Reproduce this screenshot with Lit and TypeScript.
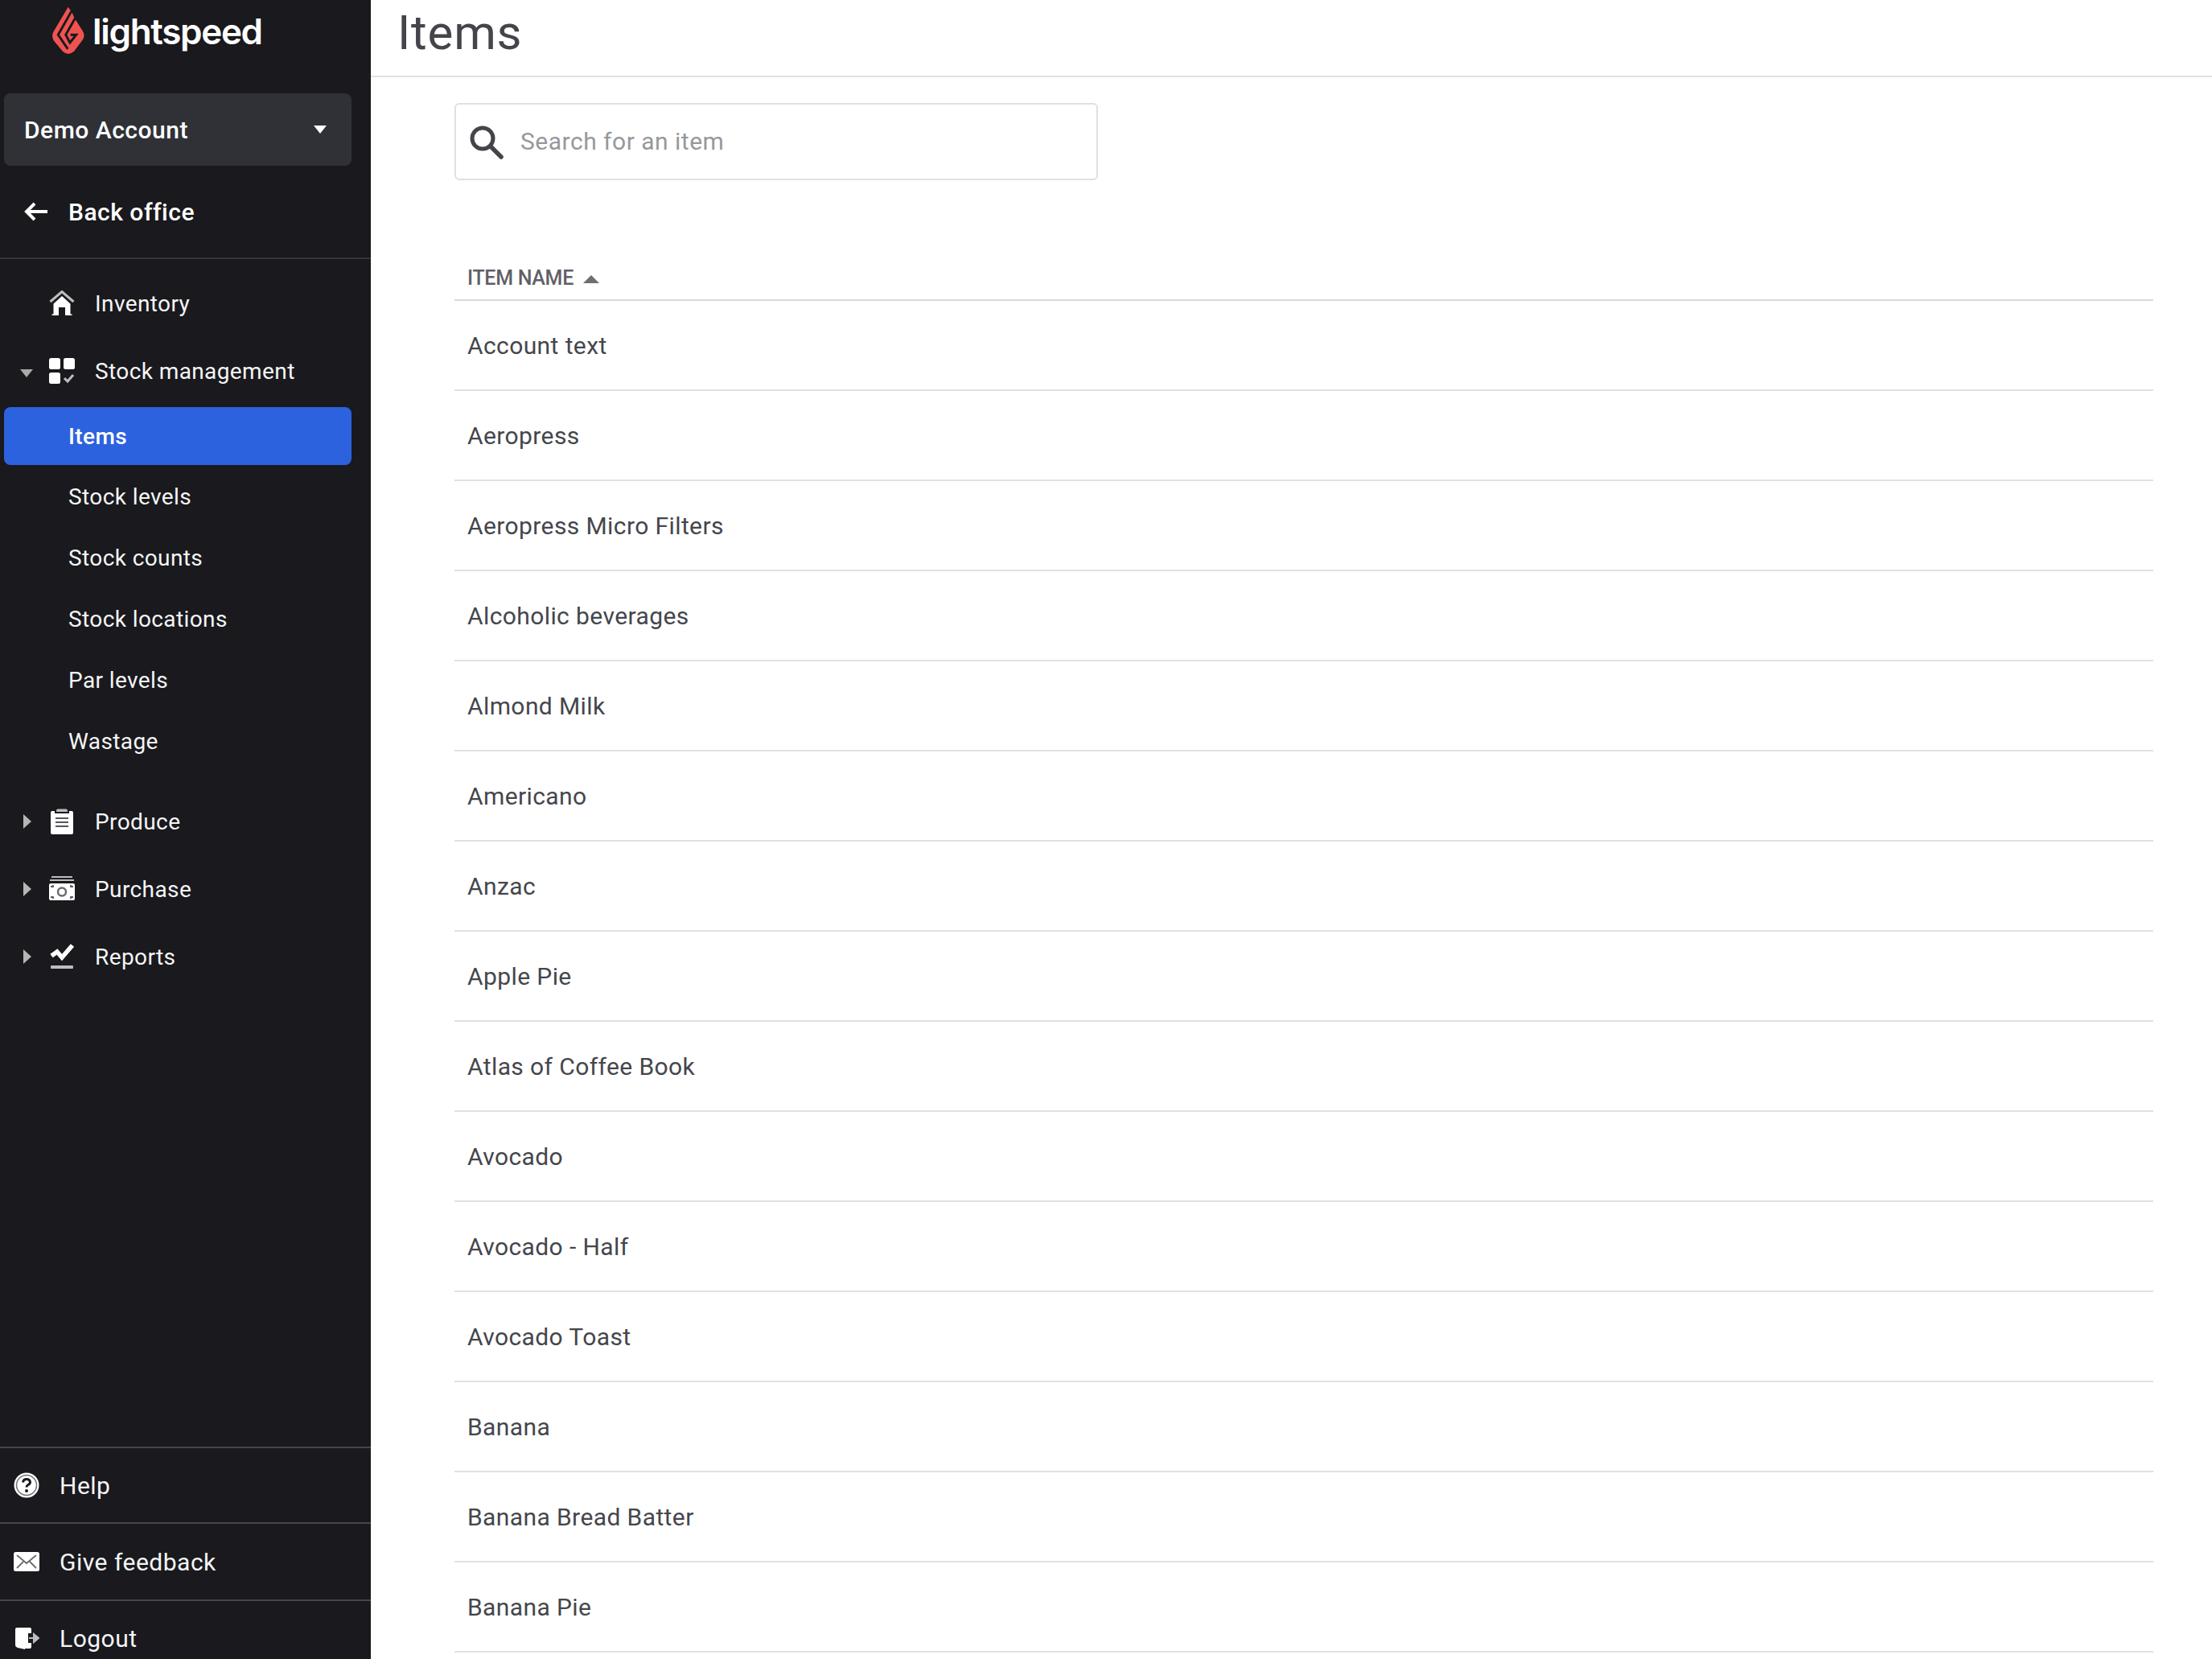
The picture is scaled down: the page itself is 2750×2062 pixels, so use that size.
import { LitElement, html, css, svg } from "lit";
import { customElement } from "lit/decorators.js";

const ITEMS = ["Account text","Aeropress","Aeropress Micro Filters","Alcoholic beverages","Almond Milk","Americano","Anzac","Apple Pie","Atlas of Coffee Book","Avocado","Avocado - Half","Avocado Toast","Banana","Banana Bread Batter","Banana Pie"];
const SUBS = ["Stock levels","Stock counts","Stock locations","Par levels","Wastage"];

const W = "#ffffff", G = "#bdbdbd";
const home = svg`<path d="M1.500 14 16 1.500 30.500 14" fill="none" stroke="${G}" stroke-width="3"/><path d="M16 7 5.500 16.500V29.500H3.500V31H12V21h8v10h8.500v-1.500h-2V16.500z" fill="${W}"/>`;
const grid = svg`<rect x="0" y="0" width="14" height="14" rx="2.5" fill="${W}"/><rect x="18" y="0" width="14" height="14" rx="2.5" fill="${W}"/><rect x="0" y="18" width="14" height="14" rx="2.5" fill="${W}"/><path d="M19 25l4 4 7-8" fill="none" stroke="${G}" stroke-width="3"/>`;
const clip = svg`<path d="M9 2.5q0-2 2-2h10q2 0 2 2V4H9z" fill="${G}"/><path d="M4 3h3v3h18V3h3q2 0 2 2v25q0 2-2 2H4q-2 0-2-2V5q0-2 2-2z" fill="${W}"/><path d="M8 12h16M8 17h16M8 22h16" stroke="#55565a" stroke-width="2"/>`;
const cash = svg`<path d="M3 1h26M1 5h30" stroke="${G}" stroke-width="2"/><path d="M2 9h28q2 0 2 2v17q0 2-2 2H2q-2 0-2-2V11q0-2 2-2z" fill="${W}"/><circle cx="16" cy="19.500" r="5" fill="none" stroke="#6a6b70" stroke-width="2.500"/><path d="M2 13h3v-2M30 13h-3v-2M2 26h3v2M30 26h-3v2" fill="none" stroke="#55565a" stroke-width="1.800"/>`;
const chart = svg`<path d="M3 15l7-5 6 7L29 2" fill="none" stroke="${W}" stroke-width="5.500"/><rect x="2" y="27" width="28" height="4" rx="1" fill="${G}"/>`;
const help = svg`<circle cx="16" cy="16" r="15.500" fill="${W}"/><circle cx="16" cy="16" r="12.500" fill="none" stroke="#707176" stroke-width="1.500"/><path d="M11.500 12.500q.5-4 4.500-4t4.500 3.500q0 2.500-2.500 3.500-2 1-2 3" fill="none" stroke="#1a1a1f" stroke-width="3"/><circle cx="16" cy="23" r="2" fill="#1a1a1f"/>`;
const mail = svg`<rect x="0" y="4" width="32" height="24" rx="2.500" fill="${W}"/><path d="M4 8l12 10L28 8M4 24l8-8M28 24l-8-8" fill="none" stroke="#6a6b70" stroke-width="1.800"/>`;
const door = svg`<path d="M2 5q0-2 2-2h16q2 0 2 2v5h-4v12h4v5q0 2-2 2h-6v1l-9-2q-3-1-3-3z" fill="${W}"/><path d="M19 16h7M25 11l6 5-6 5z" fill="${G}" stroke="${G}" stroke-width="2"/>`;

const icon = (c: unknown, s = 32) => html`<svg class="ic" width="${s}" height="${s}" viewBox="0 0 32 32">${c}</svg>`;

@customElement("app-root")
export class AppRoot extends LitElement {
  static styles = css`
    :host { display: flex; height: 100vh; overflow: hidden; background: #fff; font-family: "Roboto", "Liberation Sans", sans-serif; font-size: 30px; letter-spacing: 0.5px; }
    aside { width: 461px; flex: none; background: #19191e; color: #f5f5f5; display: flex; flex-direction: column; height: 100%; overflow: hidden; }
    .logo { height: 116px; box-sizing: border-box; padding: 8px 0 0 64px; display: flex; align-items: flex-start; gap: 9px; }
    .wordmark { font-family: "Inter", sans-serif; font-size: 44px; font-weight: 600; letter-spacing: -1.3px; color: #fff; line-height: 62px; }
    .acct { margin: 0 24px 0 5px; height: 90px; background: #303136; border-radius: 8px; display: flex; align-items: center; justify-content: space-between; padding: 0 31px 0 25px; font-weight: 500; color: #fff; }
    .caret-d { width: 0; height: 0; border: 8px solid transparent; border-top: 10px solid #fff; border-bottom: 0; }
    .back { height: 116px; box-sizing: border-box; border-bottom: 2px solid #33343a; display: flex; align-items: center; padding: 0 0 0 30px; gap: 25px; font-weight: 500; color: #fff; }
    nav { padding-top: 13px; display: flex; flex-direction: column; font-size: 28px; letter-spacing: 0.4px; }
    .row { height: 84px; display: flex; align-items: center; position: relative; padding-left: 61px; gap: 25px; }
    .tw { position: absolute; left: 25px; top: 50%; }
    .tw.d { width: 0; height: 0; margin-top: -2px; border: 8px solid transparent; border-top: 10px solid #a9a9a9; border-bottom: 0; }
    .tw.r { width: 0; height: 0; left: 29px; margin-top: -9px; border: 9px solid transparent; border-left: 10px solid #b5b5b5; border-right: 0; }
    .sel { margin: 3px 24px 1px 5px; height: 72px; background: #2d62de; border-radius: 8px; display: flex; align-items: center; padding-left: 80px; font-weight: 500; color: #fff; }
    .sub { height: 76px; display: flex; align-items: center; padding-left: 85px; }
    .gap { height: 20px; }
    footer { margin-top: auto; flex: none; height: 264px; }
    .f { height: 94px; box-sizing: border-box; border-top: 2px solid #45464b; display: flex; align-items: center; padding-left: 17px; gap: 25px; }
    .f.mid { height: 96px; }
    main { flex: 1; min-width: 0; display: flex; flex-direction: column; color: #45464c; }
    header { height: 96px; flex: none; box-sizing: border-box; border-bottom: 2px solid #dde1e4; padding: 0 0 14px 33px; display: flex; align-items: center; font-size: 60px; font-weight: 400; letter-spacing: 0.8px; color: #44454b; }
    .content { padding: 32px 73px 0 104px; }
    .search { width: 800px; height: 96px; box-sizing: border-box; border: 2px solid #dde1e4; border-radius: 6px; display: flex; align-items: center; padding: 0 0 1px 15px; gap: 21px; color: #97989b; }
    .th { margin-top: 100px; height: 50px; box-sizing: border-box; border-bottom: 2px solid #d5d9dc; padding: 0 0 5px 16px; display: flex; align-items: center; gap: 12px; font-size: 25px; font-weight: 500; letter-spacing: -0.3px; color: #5f6066; }
    .up { width: 0; height: 0; border: 10px solid transparent; border-bottom: 10px solid #6d6e73; border-top: 0; margin-top: 2px; }
    .tr { height: 112px; box-sizing: border-box; border-bottom: 2px solid #dde1e4; padding: 1px 0 0 16px; display: flex; align-items: center; letter-spacing: 0.4px; }
  `;

  render() {
    return html`
      <aside>
        <div class="logo">
          <svg width="42" height="60" viewBox="14 10 124 184">
            <path d="M75 12 20 105q-10 17 0 35l35 42q20 18 42 0l33-44q12-18 0-35L100 55 88 30z" fill="#ef5350"/>
            <path d="M88 28 37 118l37 54" fill="none" stroke="#19191e" stroke-width="9"/>
            <path d="M108 44 66 118l16 30 24-30H84" fill="none" stroke="#19191e" stroke-width="9"/>
          </svg>
          <span class="wordmark">lightspeed</span>
        </div>
        <div class="acct"><span>Demo Account</span><span class="caret-d"></span></div>
        <div class="back">
          <svg width="30" height="24" viewBox="0 0 30 24"><path d="M29 12H4M13 2 3 12l10 10" fill="none" stroke="#fff" stroke-width="4"/></svg>
          <span>Back office</span>
        </div>
        <nav>
          <div class="row">${icon(home)}<span>Inventory</span></div>
          <div class="row"><span class="tw d"></span>${icon(grid)}<span>Stock management</span></div>
          <div class="sel">Items</div>
          ${SUBS.map((s) => html`<div class="sub">${s}</div>`)}
          <div class="gap"></div>
          <div class="row"><span class="tw r"></span>${icon(clip)}<span>Produce</span></div>
          <div class="row"><span class="tw r"></span>${icon(cash)}<span>Purchase</span></div>
          <div class="row"><span class="tw r"></span>${icon(chart)}<span>Reports</span></div>
        </nav>
        <footer>
          <div class="f">${icon(help)}<span>Help</span></div>
          <div class="f mid">${icon(mail)}<span>Give feedback</span></div>
          <div class="f">${icon(door)}<span>Logout</span></div>
        </footer>
      </aside>
      <main>
        <header>Items</header>
        <div class="content">
          <div class="search">
            <svg width="44" height="44" viewBox="0 0 44 44"><circle cx="18" cy="18" r="13" fill="none" stroke="#44454b" stroke-width="5"/><path d="M28 28l13 13" stroke="#44454b" stroke-width="5.500" stroke-linecap="round"/></svg>
            <span>Search for an item</span>
          </div>
          <div class="th"><span>ITEM NAME</span><span class="up"></span></div>
          ${ITEMS.map((t) => html`<div class="tr">${t}</div>`)}
        </div>
      </main>
    `;
  }
}
